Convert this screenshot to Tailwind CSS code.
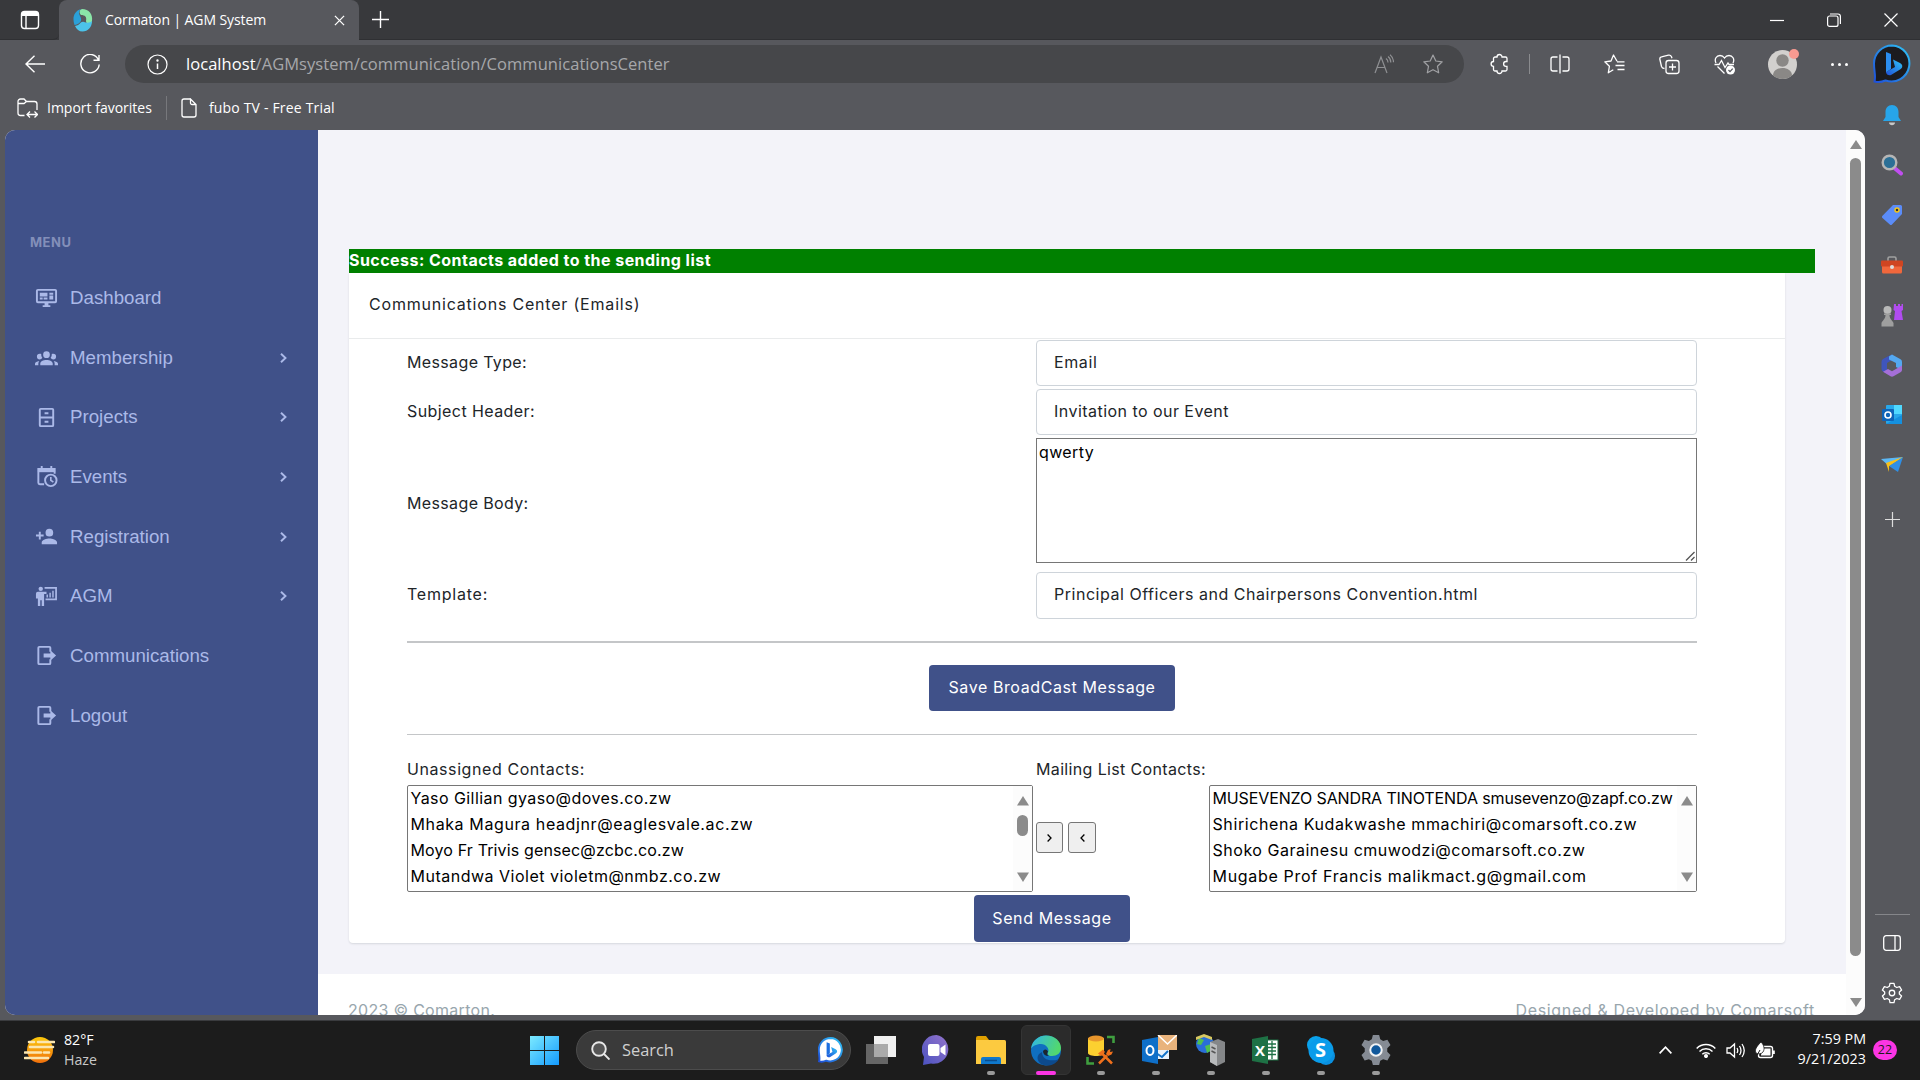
<!DOCTYPE html>
<html lang="en">
<head>
<meta charset="utf-8">
<title>Cormaton | AGM System</title>
<script src="https://cdn.jsdelivr.net/npm/@tailwindcss/browser@4"></script>
</head>
<body class="w-[1920px] h-[1080px] overflow-hidden flex flex-col bg-[#57585d] text-white font-['Open_Sans',sans-serif] whitespace-nowrap">

<!-- Tab bar -->
<header class="h-10 flex items-stretch bg-[#38393c] shrink-0">
  <div class="w-[59px] flex items-center justify-center border-b border-[#2f3033] rounded-br-md">
    <svg class="w-5 h-5" viewBox="0 0 20 20" fill="none" stroke="#fff" stroke-width="1.4"><rect x="1.5" y="1.5" width="17" height="17" rx="3"/><path d="M2 4h16" stroke-width="4"/><path d="M6 5v13"/></svg>
  </div>
  <div class="w-[300px] flex items-center bg-[#57585d] rounded-t-lg pl-[14px] pr-2">
    <svg class="w-5 h-6 mr-[12px]" viewBox="0 0 20 24"><path d="M9 1C16 1 20 6 19 13c0 4-6 4-6 0 1-4-1-6-5-6C6 5 6 2 9 1z" fill="#8ae6a8"/><path d="M8 1C1 3-1 10 1.500 17c5-1 8-4 6-8C6 6 5 4 8 1z" fill="#2aa0d8"/><path d="M2 18c6-1 5-5 9-4 3 1 6 1 8-1 0 6-4 10.500-9.500 10.500C6 23.500 3.500 21.500 2 18z" fill="#4cc3ea"/></svg>
    <span class="text-[14px] tracking-[-0.1px] pb-[2px]">Cormaton | AGM System</span>
    <svg class="w-[11px] h-[11px] ml-auto mr-1.5" viewBox="0 0 12 12" stroke="#fff" stroke-width="1.4"><path d="M1 1l10 10M11 1L1 11"/></svg>
  </div>
  <div class="flex-1 flex items-center border-b border-[#2f3033] pl-[13px]">
    <svg class="w-[17px] h-[17px]" viewBox="0 0 17 17" stroke="#fff" stroke-width="1.4"><path d="M8.5 0v17M0 8.5h17"/></svg>
    <div class="ml-auto mr-[1px] flex">
      <div class="w-[57px] flex justify-center items-center"><svg class="w-[14px] h-[14px]" viewBox="0 0 14 14" stroke="#fff" stroke-width="1.2"><path d="M0 7.500h14"/></svg></div>
      <div class="w-[57px] flex justify-center items-center"><svg class="w-[14px] h-[14px]" viewBox="0 0 14 14" fill="none" stroke="#fff" stroke-width="1.2"><rect x=".6" y="3" width="10.400" height="10.400" rx="2"/><path d="M3 1h8a2.500 2.500 0 0 1 2.400 2.500V11"/></svg></div>
      <div class="w-[57px] flex justify-center items-center"><svg class="w-[14px] h-[14px]" viewBox="0 0 14 14" stroke="#fff" stroke-width="1.200"><path d="M.5.5l13 13M13.500.500l-13 13"/></svg></div>
    </div>
  </div>
</header>

<div class="flex flex-1 min-h-0">
<div class="w-[1865px] flex flex-col">

  <!-- Toolbar -->
  <div class="h-12 flex items-center shrink-0">
    <div class="w-[69px] flex justify-center"><svg class="w-5 h-[18px]" viewBox="0 0 20 18" fill="none" stroke="#fff" stroke-width="1.400"><path d="M20 9H1M9.500.700L1 9l8.500 8.300"/></svg></div>
    <div class="w-[42px] flex justify-center"><svg class="w-5 h-5" viewBox="0 0 20 20" fill="none" stroke="#fff" stroke-width="1.400"><path d="M18.500 6A9.200 9.200 0 1 0 19.200 10.500M19 1v5.300h-5.500"/></svg></div>
    <div class="ml-[14px] w-[1339px] h-[38px] rounded-full bg-[#46474a] flex items-center pl-[22px] pr-[21px]">
      <svg class="w-[21px] h-[21px] mr-[18px]" viewBox="0 0 21 21" fill="none" stroke="#fff" stroke-width="1.200"><circle cx="10.500" cy="10.500" r="9.500"/><path d="M10.500 9.500v5.500" stroke-width="1.500"/><circle cx="10.500" cy="6.500" r=".6" fill="#fff"/></svg>
      <span class="text-[16.5px] tracking-[0.05px] text-[#a6a7aa]"><span class="text-white">localhost</span>/AGMsystem/communication/CommunicationsCenter</span>
      <svg class="w-5 h-5 ml-auto mr-[29px]" viewBox="0 0 20 20" fill="none" stroke="#8f9093" stroke-width="1.200"><path d="M1 19L7 3l6 16M3 13.500h8M12 4.500q2 1.500 2 4M14 2.500q2.800 2 2.800 6M16 .8q3.500 3 3.500 7.500"/></svg>
      <svg class="w-5 h-5" viewBox="0 0 20 20" fill="none" stroke="#a0a1a4" stroke-width="1.200" stroke-linejoin="round"><path d="M10 1l2.800 6 6.400.8-4.700 4.500 1.200 6.500L10 15.700l-5.700 3.100 1.200-6.500L.8 7.800 7.200 7z"/></svg>
    </div>
    <div class="w-[50px] ml-[10px] flex justify-center"><svg class="w-5 h-[22px]" viewBox="0 0 20 22" fill="none" stroke="#fff" stroke-width="1.300"><path d="M8 4a2.500 2.500 0 0 1 5 0h3.500A1.500 1.500 0 0 1 18 5.500v3h-1a2.400 2.400 0 0 0 0 4.800h1v3.200a1.500 1.500 0 0 1-1.500 1.500H13a2.500 2.500 0 0 1-5 0H6a1.500 1.500 0 0 1-1.500-1.500v-3.200a2.400 2.400 0 0 1 0-4.800v-3A1.500 1.500 0 0 1 6 4z"/></svg></div>
    <div class="w-[11px] flex justify-center"><div class="w-px h-5 bg-[#8a8b8e]"></div></div>
    <div class="w-[49px] mr-[3px] flex justify-center"><svg class="w-5 h-5" viewBox="0 0 20 20" fill="none" stroke="#fff" stroke-width="1.300"><path d="M7.500 3H3a2 2 0 0 0-2 2v10a2 2 0 0 0 2 2h4.500M12.500 3H17a2 2 0 0 1 2 2v10a2 2 0 0 1-2 2h-4.500M10 .5v19"/></svg></div>
    <div class="w-[55px] flex justify-center"><svg class="w-[21px] h-5" viewBox="0 0 21 20" fill="none" stroke="#fff" stroke-width="1.300" stroke-linejoin="round"><path d="M13 7.300L9.500 1 7 7l-6.200.8 4.600 4.500-1.100 6.500 5-3M13 7.800h7.500M11.500 11.500h9M13.500 15.500h7"/></svg></div>
    <div class="w-[55px] flex justify-center"><svg class="w-[21px] h-[21px]" viewBox="0 0 21 21" fill="none" stroke="#fff" stroke-width="1.300"><rect x="7" y="6.500" width="13" height="13" rx="2.500"/><path d="M13.500 9.500v7M10 13h7M5.500 14.500c-2 0-2.600-.6-3-2L.9 5.500c-.3-1.400.3-2.300 1.600-2.600l7-1.800c1.600-.3 2.400.3 3 1.700l.5 1.500"/></svg></div>
    <div class="w-[55px] flex justify-center"><svg class="w-[21px] h-[21px]" viewBox="0 0 21 21" fill="none" stroke="#fff" stroke-width="1.300"><path d="M2 9C0 5 2.500 1.500 6 1.500c2 0 3.500 1 4.500 2.500C11.500 2.500 13 1.500 15 1.500c3.500 0 6 3.500 4 7.500M3.500 12.500l7 7M.5 10.500H5l2.500-4 3.500 7 3-4.500 1 1.500h5"/><circle cx="16.500" cy="16" r="4.500" fill="#fff" stroke="none"/><path d="M14.500 16l1.500 1.600 2.700-3" stroke="#57585d"/></svg></div>
    <div class="w-[61px] flex justify-center"><div class="relative w-[29px] h-[29px]"><svg class="w-[29px] h-[29px]" viewBox="0 0 29 29"><circle cx="14.500" cy="14.500" r="14.500" fill="#d2d0ce"/><circle cx="14.500" cy="10.500" r="6.200" fill="#8a8886"/><path d="M5 25.400c0-10 19-10 19 0a14.500 14.500 0 0 1-19 0z" fill="#8a8886"/></svg><div class="absolute -top-[1px] -right-[2px] w-[10px] h-[10px] rounded-full bg-[#f79a91]"></div></div></div>
    <div class="flex-1 flex justify-center gap-[4px]"><i class="w-[3px] h-[3px] rounded-full bg-white"></i><i class="w-[3px] h-[3px] rounded-full bg-white"></i><i class="w-[3px] h-[3px] rounded-full bg-white"></i></div>
  </div>

  <!-- Favorites bar -->
  <div class="h-10 flex items-center shrink-0 pl-[17px] text-[14px]">
    <svg class="w-[21px] h-5 mr-[9px]" viewBox="0 0 21 20" fill="none" stroke="#fff" stroke-width="1.300"><path d="M7.500 17.500H3.500A2.500 2.500 0 0 1 1 15V3.500A2.500 2.500 0 0 1 3.500 1H7l2.500 2.500h8A2.500 2.500 0 0 1 20 6v6M1 5.500h6l2.500-2M10.500 16.500h9M13 13.500l-3 3 3 3M17.500 13.500l3 3-3 3"/></svg>
    <span class="pb-[2px]">Import favorites</span>
    <div class="w-px h-6 bg-[#77787c] ml-[14px] mr-[14px]"></div>
    <svg class="w-4 h-5 mr-[12px]" viewBox="0 0 16 20" fill="none" stroke="#fff" stroke-width="1.300"><path d="M9.500 1H3a2 2 0 0 0-2 2v14a2 2 0 0 0 2 2h10a2 2 0 0 0 2-2V6.500L9.500 1v4a1.500 1.500 0 0 0 1.500 1.500h4"/></svg>
    <span class="tracking-[0.18px] pb-[2px]">fubo TV - Free Trial</span>
  </div>

  <!-- Page viewport -->
  <div class="ml-[5px] h-[885px] mt-[2px] flex bg-[#f3f3f9] rounded-[10px] overflow-hidden">

    <nav class="w-[313px] shrink-0 bg-[#405189] text-[#abb9e8] font-['Liberation_Sans',Arial,sans-serif] text-[18.7px] flex flex-col">
      <div class="mt-[100px] h-[24px] leading-6 pl-[25px] text-[13px] font-bold text-[#838fb9] font-['Inter',sans-serif] tracking-[0.5px] mb-[14px]">MENU</div>
      <a class="h-[59.7px] flex items-center pl-[30px] pr-[31px]"><svg class="w-[23px] h-[23px] mr-[12px]" viewBox="0 0 24 24" fill="currentColor"><path fill-rule="evenodd" d="M3 3h18a2 2 0 0 1 2 2v11a2 2 0 0 1-2 2h-7v2h2v2H8v-2h2v-2H3a2 2 0 0 1-2-2V5a2 2 0 0 1 2-2zm0 2v11h18V5z"/><path d="M5 7h8v4H5zM15 7h4v2h-4zM15 10h4v4h-4zM5 12h3v2H5zM9 12h4v2H9z"/></svg>Dashboard</a>
      <a class="h-[59.7px] flex items-center pl-[30px] pr-[31px]"><svg class="w-[23px] h-[23px] mr-[12px]" viewBox="0 0 24 24" fill="currentColor"><path d="M12,5.500A3.500,3.500 0 0,1 15.500,9A3.500,3.500 0 0,1 12,12.500A3.500,3.500 0 0,1 8.500,9A3.500,3.500 0 0,1 12,5.500M5,8C5.560,8 6.080,8.150 6.530,8.420C6.380,9.850 6.800,11.270 7.660,12.380C7.160,13.340 6.160,14 5,14A3,3 0 0,1 2,11A3,3 0 0,1 5,8M19,8A3,3 0 0,1 22,11A3,3 0 0,1 19,14C17.840,14 16.840,13.340 16.340,12.380C17.200,11.270 17.620,9.850 17.470,8.420C17.920,8.150 18.440,8 19,8M5.500,18.250C5.500,16.180 8.410,14.500 12,14.500C15.590,14.500 18.500,16.180 18.500,18.250V20H5.500V18.250M0,20V18.500C0,17.110 1.890,15.940 4.450,15.600C3.860,16.280 3.500,17.220 3.500,18.250V20H0M24,20H20.500V18.250C20.500,17.220 20.140,16.280 19.550,15.600C22.110,15.940 24,17.110 24,18.500V20Z"/></svg>Membership<svg class="w-[7px] h-[10px] ml-auto" viewBox="0 0 7 10" fill="none" stroke="currentColor" stroke-width="1.900"><path d="M1 .7L5.500 5 1 9.300"/></svg></a>
      <a class="h-[59.7px] flex items-center pl-[30px] pr-[31px]"><svg class="w-[23px] h-[23px] mr-[12px]" viewBox="0 0 24 24" fill="none" stroke="currentColor" stroke-width="2"><rect x="5" y="3" width="14" height="18" rx="1"/><path d="M5 12h14M10 7.500h4M10 16.500h4"/></svg>Projects<svg class="w-[7px] h-[10px] ml-auto" viewBox="0 0 7 10" fill="none" stroke="currentColor" stroke-width="1.900"><path d="M1 .7L5.500 5 1 9.300"/></svg></a>
      <a class="h-[59.7px] flex items-center pl-[30px] pr-[31px]"><svg class="w-[23px] h-[23px] mr-[12px]" viewBox="0 0 24 24" fill="none" stroke="currentColor" stroke-width="2"><path d="M9.500 20H5a1.500 1.500 0 0 1-1.500-1.500V4h17v5M7 1v3M17 1v3"/><path d="M3 5.500h18" stroke-width="4"/><circle cx="16.500" cy="16" r="6"/><path d="M16.500 12.500V16l2.700 1.700" stroke-width="1.700"/></svg>Events<svg class="w-[7px] h-[10px] ml-auto" viewBox="0 0 7 10" fill="none" stroke="currentColor" stroke-width="1.900"><path d="M1 .7L5.500 5 1 9.300"/></svg></a>
      <a class="h-[59.7px] flex items-center pl-[30px] pr-[31px]"><svg class="w-[23px] h-[23px] mr-[12px]" viewBox="0 0 24 24" fill="currentColor"><path d="M15,14C12.330,14 7,15.330 7,18V20H23V18C23,15.330 17.670,14 15,14M6,10V7H4V10H1V12H4V15H6V12H9V10M15,12A4,4 0 0,0 19,8A4,4 0 0,0 15,4A4,4 0 0,0 11,8A4,4 0 0,0 15,12Z"/></svg>Registration<svg class="w-[7px] h-[10px] ml-auto" viewBox="0 0 7 10" fill="none" stroke="currentColor" stroke-width="1.900"><path d="M1 .7L5.500 5 1 9.300"/></svg></a>
      <a class="h-[59.7px] flex items-center pl-[30px] pr-[31px]"><svg class="w-[23px] h-[23px] mr-[12px]" viewBox="0 0 24 24" fill="currentColor"><circle cx="6" cy="4" r="2.300"/><path d="M3 7h9v2.500H9.500V22H7v-6H5.500v6H3v-8H1V9a2 2 0 0 1 2-2z"/><path d="M10 3h12v12H11" fill="none" stroke="currentColor" stroke-width="1.800"/><path d="M12 10h1.500v3H12zM15 8h1.500v5H15zM18 6h1.500v7H18z"/></svg>AGM<svg class="w-[7px] h-[10px] ml-auto" viewBox="0 0 7 10" fill="none" stroke="currentColor" stroke-width="1.900"><path d="M1 .7L5.500 5 1 9.300"/></svg></a>
      <a class="h-[59.7px] flex items-center pl-[30px] pr-[31px]"><svg class="w-[23px] h-[23px] mr-[12px]" viewBox="0 0 24 24" fill="none" stroke="currentColor" stroke-width="2"><path d="M16 8V4a1 1 0 0 0-1-1H4.500a1 1 0 0 0-1 1v16a1 1 0 0 0 1 1H15a1 1 0 0 0 1-1v-4"/><path d="M9 10h7V6.500l6 5.500-6 5.500V14H9z" fill="currentColor" stroke="none"/></svg>Communications</a>
      <a class="h-[59.7px] flex items-center pl-[30px] pr-[31px]"><svg class="w-[23px] h-[23px] mr-[12px]" viewBox="0 0 24 24" fill="none" stroke="currentColor" stroke-width="2"><path d="M16 8V4a1 1 0 0 0-1-1H4.500a1 1 0 0 0-1 1v16a1 1 0 0 0 1 1H15a1 1 0 0 0 1-1v-4"/><path d="M9 10h7V6.500l6 5.500-6 5.500V14H9z" fill="currentColor" stroke="none"/></svg>Logout</a>
    </nav>

    <main class="w-[1528px] shrink-0 flex flex-col font-['Inter',sans-serif] text-[16px] leading-6 text-[#212529]">
      <div class="mt-[119px] ml-[31px] w-[1466px] h-[24px] shrink-0 bg-[#008000] text-white font-bold tracking-[0.46px] leading-[23px]">Success: Contacts added to the sending list</div>

      <section class="ml-[31px] w-[1436px] h-[670px] shrink-0 bg-white rounded-b shadow-[0_1px_2px_rgba(56,65,74,0.15)] flex flex-col">
        <h1 class="h-[66px] shrink-0 pt-[19px] px-5 border-b border-[#e9ebec] tracking-[0.8px]">Communications Center (Emails)</h1>

        <div class="pl-[58px] pr-[88px] flex flex-col">
          <div class="mt-[1px] flex items-center h-[48px]">
            <span class="w-[629px] tracking-[0.36px] pb-1">Message Type:</span>
            <div class="w-[661px] h-[46px] mb-[2px] border border-[#ced4da] rounded px-[17px] leading-[43px] tracking-[0.6px]">Email</div>
          </div>
          <div class="flex items-center h-[50px]">
            <span class="w-[629px] tracking-[0.42px] pb-1">Subject Header:</span>
            <div class="w-[661px] h-[46px] mb-[2px] border border-[#ced4da] rounded px-[17px] leading-[43px] tracking-[0.46px]">Invitation to our Event</div>
          </div>
          <div class="flex items-start h-[134px]">
            <span class="w-[629px] mt-[53px] tracking-[0.36px]">Message Body:</span>
            <div class="relative w-[661px] h-[125px] border border-[#767676] pl-[2px] pt-[1px] text-black tracking-[0.38px]">qwerty<svg class="absolute right-[1px] bottom-[1px] w-[10px] h-[10px]" viewBox="0 0 10 10" stroke="#555" stroke-width="1.300"><path d="M1 9.500L9.500 1M6 9.500L9.500 6"/></svg></div>
          </div>
          <div class="flex items-start h-[69px]">
            <span class="w-[629px] mt-[10px] tracking-[0.77px]">Template:</span>
            <div class="w-[661px] h-[47px] border border-[#ced4da] rounded px-[17px] leading-[43px] tracking-[0.53px]">Principal Officers and Chairpersons Convention.html</div>
          </div>
          <div class="h-[2px] bg-[#c4c6c8]"></div>
          <button class="mt-[22px] ml-[522px] w-[246px] h-[46px] rounded bg-[#405189] text-white tracking-[0.6px] pb-[2px]">Save BroadCast Message</button>
          <div class="mt-[23px] h-px bg-[#c4c6c8]"></div>
          <div class="mt-[22px] h-[28px] flex">
            <span class="w-[629px] tracking-[0.58px]">Unassigned Contacts:</span>
            <span class="tracking-[0.35px]">Mailing List Contacts:</span>
          </div>
          <div class="flex h-[107px] text-black leading-[26px]">
            <div class="w-[626px] flex border border-[#767676] rounded-[2px]">
              <ul class="flex-1 pl-[2.5px] -mt-px">
                <li class="tracking-[0.43px]">Yaso Gillian gyaso@doves.co.zw</li>
                <li class="tracking-[0.61px]">Mhaka Magura headjnr@eaglesvale.ac.zw</li>
                <li class="tracking-[0.14px]">Moyo Fr Trivis gensec@zcbc.co.zw</li>
                <li class="tracking-[0.5px]">Mutandwa Violet violetm@nmbz.co.zw</li>
              </ul>
              <div class="w-[19px] bg-[#fcfcfc] flex flex-col items-center pt-[10px] pb-[9px]">
                <svg class="w-3 h-[10px]" viewBox="0 0 12 10" fill="#8b8b8b"><path d="M6 0l6 9.500H0z"/></svg>
                <div class="mt-[9px] w-[11px] h-[21px] rounded-full bg-[#8b8b8b]"></div>
                <svg class="mt-auto w-3 h-[10px]" viewBox="0 0 12 10" fill="#8b8b8b"><path d="M6 10L0 .5h12z"/></svg>
              </div>
            </div>
            <div class="ml-[3px] mt-[37px] flex gap-[5px]">
              <button class="w-[27px] h-[31px] bg-[#efefef] border border-[#767676] rounded-[3px] flex items-center justify-center"><svg class="w-[5px] h-2" viewBox="0 0 5 8" fill="none" stroke="#000" stroke-width="1.300"><path d="M.6.500L4 4 .6 7.500"/></svg></button>
              <button class="w-[28px] h-[31px] bg-[#efefef] border border-[#767676] rounded-[3px] flex items-center justify-center"><svg class="w-[5px] h-2" viewBox="0 0 5 8" fill="none" stroke="#000" stroke-width="1.300"><path d="M4.400.500L1 4l3.400 3.500"/></svg></button>
            </div>
            <div class="ml-auto w-[488px] flex border border-[#767676] rounded-[2px]">
              <ul class="flex-1 min-w-0 pl-[2.5px] -mt-px">
                <li class="tracking-[-0.12px]">MUSEVENZO SANDRA TINOTENDA smusevenzo@zapf.co.zw</li>
                <li class="tracking-[0.6px]">Shirichena Kudakwashe mmachiri@comarsoft.co.zw</li>
                <li class="tracking-[0.52px]">Shoko Garainesu cmuwodzi@comarsoft.co.zw</li>
                <li class="tracking-[0.68px]">Mugabe Prof Francis malikmact.g@gmail.com</li>
              </ul>
              <div class="w-[19px] bg-[#fcfcfc] flex flex-col items-center pt-[10px] pb-[9px]">
                <svg class="w-3 h-[10px]" viewBox="0 0 12 10" fill="#8b8b8b"><path d="M6 0l6 9.500H0z"/></svg>
                <svg class="mt-auto w-3 h-[10px]" viewBox="0 0 12 10" fill="#8b8b8b"><path d="M6 10L0 .5h12z"/></svg>
              </div>
            </div>
          </div>
          <button class="mt-[3px] ml-[567px] w-[156px] h-[47px] rounded bg-[#405189] text-white tracking-[0.6px] pb-[2px]">Send Message</button>
        </div>
      </section>

      <footer class="mt-[31px] h-[60px] shrink-0 bg-white text-[#98a6ad] pl-[30px] pr-[31px] pt-[24px] flex justify-between">
        <span class="tracking-[0.29px]">2023 © Comarton.</span>
        <span class="tracking-[0.64px]">Designed &amp; Developed by Comarsoft</span>
      </footer>
    </main>

    <div class="flex-1 bg-[#fcfcfc] flex flex-col items-center pt-[10px] pb-[8px]">
      <svg class="w-3 h-[9px]" viewBox="0 0 12 10" preserveAspectRatio="none" fill="#8b8b8b"><path d="M6 0l6 10H0z"/></svg>
      <div class="mt-[9px] w-[11px] h-[798px] rounded-full bg-[#8b8b8b]"></div>
      <svg class="mt-auto w-3 h-[9px]" viewBox="0 0 12 10" preserveAspectRatio="none" fill="#8b8b8b"><path d="M6 10L0 0h12z"/></svg>
    </div>
  </div>
</div>

<!-- Edge sidebar -->
<aside class="w-[55px] pr-[1px] flex flex-col items-center">
  <div class="h-12 flex items-center"><svg class="w-[38px] h-[40px]" viewBox="0 0 38 40"><defs><linearGradient id="bg1" x1="0" y1="1" x2="1" y2="0"><stop offset="0" stop-color="#1f4fd8"/><stop offset="1" stop-color="#2fc3f5"/></linearGradient></defs><path d="M19 1.500a18 18 0 1 1-6.500 35C9 38 5 38.500 1.500 37.500 3 32 1 28 1 19.500A18 18 0 0 1 19 1.500z" fill="#1b1b1f" stroke="url(#bg1)" stroke-width="2"/><path d="M13 8l5 2v15l-5 3.500z" fill="#2b8df0"/><path d="M20 15.500l7 3.500c3 1.500 3 5 0 6.500L18 31c-2 1-5-.5-5-3l9-5z" fill="url(#bg1)"/></svg></div>
  <div class="mt-[2px] h-[50px] flex items-center"><svg class="w-5 h-[22px]" viewBox="0 0 20 22"><path d="M10 1c4 0 6.500 3 6.500 7v5L19 17H1l2.500-4V8C3.500 4 6 1 10 1z" fill="#27a5ea"/><path d="M7 18.500h6c0 3.500-6 3.500-6 0z" fill="#c8c8c8"/></svg></div>
  <div class="h-[49px] flex items-center"><svg class="w-[22px] h-[22px]" viewBox="0 0 22 22"><path d="M14 14.500l6 5" stroke="#c04ef0" stroke-width="4" stroke-linecap="round"/><circle cx="8.500" cy="8.500" r="6.800" fill="#2b6f96" stroke="#b5b5b5" stroke-width="2.400"/></svg></div>
  <div class="h-[51px] flex items-center"><svg class="w-[22px] h-[22px]" viewBox="0 0 22 22"><path d="M12 1h7.500A1.500 1.500 0 0 1 21 2.500V10l-10 10.500c-.7.700-1.500.7-2.200 0L1.500 14c-.7-.7-.7-1.500 0-2.200z" fill="#5b8cf8"/><circle cx="16" cy="6" r="2" fill="#333" stroke="#f5c518" stroke-width="1.500"/></svg></div>
  <div class="h-[50px] flex items-center"><svg class="w-6 h-[18px]" viewBox="0 0 24 18"><path d="M8 5V2.500Q8 1 9.500 1h5Q16 1 16 2.500V5" fill="none" stroke="#a0a0a0" stroke-width="1.600"/><rect x="2" y="8" width="20" height="9.500" rx="1.500" fill="#f0673c"/><rect x="1" y="4.500" width="22" height="6" rx="1" fill="#cf4522"/><circle cx="12" cy="11" r="2" fill="#ddd"/></svg></div>
  <div class="h-[50px] flex items-center"><svg class="w-6 h-6" viewBox="0 0 24 24"><path d="M14 1h2v2h2V1h2v2h1.500V1H23v6l-1.500 1L23 17h-9l1-9-1.500-1z" fill="#b14cf0"/><circle cx="7.500" cy="7" r="4" fill="#b9b9b9"/><path d="M4 10.500h7v1.500H9.500c0 4 3.500 6 4 8v3.500h-12V20c.5-2 4-4 4-8H4z" fill="#9f9f9f"/></svg></div>
  <div class="h-[50px] flex items-center"><svg class="w-[22px] h-[23px]" viewBox="0 0 22 23"><path d="M9 1.200L2 5Q.5 6 .5 8v7q0 2 2 3l3.500 1.500V9l6-3.500V1Q10.500.3 9 1.200z" fill="#3f55bc"/><path d="M11 .5l8.500 4.700Q21 6 21 8v8l-6-3V9L8 5.500V2.500z" fill="#54a8f0"/><path d="M2 17.700L7 15l4 2.300 10-5.800V16q0 1.500-1.500 2.300l-7 4q-1.500.8-3 0z" fill="#a56fd8"/></svg></div>
  <div class="h-[50px] flex items-center"><svg class="w-5 h-5" viewBox="0 0 20 20"><rect x="4" y="0" width="16" height="19" rx="1" fill="#28a8ea"/><path d="M12 0h8v9h-8z" fill="#50d9ff"/><path d="M4 19l16-9v9z" fill="#1490df"/><rect x="0" y="4" width="12" height="12" rx="1" fill="#0f64b8"/><circle cx="6" cy="10" r="3" fill="none" stroke="#fff" stroke-width="1.600"/></svg></div>
  <div class="h-[50px] flex items-center"><svg class="w-[22px] h-[18px]" viewBox="0 0 22 18"><path d="M0 3l22-2-14 9z" fill="#5cb8f5"/><path d="M22 1L17 16l-9-6z" fill="#2f8fe6"/><path d="M5 7l17-6L8 10v6z" fill="#f8c018"/></svg></div>
  <div class="mt-[4px] h-[50px] flex items-center"><svg class="w-[15px] h-[15px]" viewBox="0 0 15 15" stroke="#ddd" stroke-width="1.200"><path d="M7.500 0v15M0 7.500h15"/></svg></div>
  <div class="mt-auto w-[35px] h-px bg-[#85868a]"></div>
  <div class="mt-[3px] h-[50px] flex items-center"><svg class="w-[18px] h-4" viewBox="0 0 18 16" fill="none" stroke="#fff" stroke-width="1.300"><rect x=".7" y=".7" width="16.600" height="14.600" rx="2.500"/><path d="M12 1v14"/></svg></div>
  <div class="h-[50px] mb-[2px] flex items-center"><svg class="w-[22px] h-[22px]" viewBox="0 0 24 24" fill="none" stroke="#fff" stroke-width="1.400" stroke-linejoin="round"><circle cx="12" cy="12" r="3"/><path d="M9.800 1.500h4.400l.7 3.200 2.300 1.300 3.100-1 2.200 3.800L20 11v2l2.500 2.200-2.200 3.800-3.100-1-2.300 1.300-.7 3.200H9.800l-.7-3.200L6.800 18l-3.100 1-2.200-3.800L4 13v-2L1.500 8.800 3.700 5l3.100 1 2.300-1.300z"/></svg></div>
</aside>
</div>

<!-- Taskbar -->
<footer class="h-[60px] shrink-0 bg-[#1c1c1c] border-t border-[#3a3b3e] flex items-center pb-[1px]">
  <svg class="w-[31px] h-7 ml-[24px]" viewBox="0 0 31 28"><defs><linearGradient id="sun" x1="0" y1="0" x2="0" y2="1"><stop offset="0" stop-color="#fcc80c"/><stop offset="1" stop-color="#f0700c"/></linearGradient></defs><circle cx="16" cy="14" r="13" fill="url(#sun)"/><path d="M5 6h5M14 6h16M6 11h23M1 16.500h16M20 16.500h5M1 22h23" stroke="#fbe6b0" stroke-width="2.600" stroke-linecap="round"/></svg>
  <div class="ml-[9px] w-[60px] text-[14.2px] leading-[20px] pb-[1px]"><div>82°F</div><div class="text-[#c8c8c8]">Haze</div></div>
  <svg class="ml-[406px] w-[29px] h-[29px]" viewBox="0 0 29 29"><defs><linearGradient id="win" x1="0" y1="0" x2="1" y2="1"><stop offset="0" stop-color="#7ceaff"/><stop offset="1" stop-color="#149bff"/></linearGradient></defs><path d="M0 0h14v14H0zM15 0h14v14H15zM0 15h14v14H0zM15 15h14v14H15z" fill="url(#win)"/></svg>
  <div class="ml-[17px] w-[275px] h-10 rounded-full bg-[#3a3a3a] border border-[#4c4c4c] flex items-center pl-[14px] pr-[7px]">
    <svg class="w-[19px] h-[19px] mr-[12px]" viewBox="0 0 19 19" fill="none" stroke="#e8e8e8" stroke-width="1.900"><circle cx="8" cy="8" r="6.800" fill="#555"/><path d="M13 13l5.500 5.500"/></svg>
    <span class="text-[16.4px] text-[#d0d0d0]">Search</span>
    <svg class="w-[25px] h-[26px] ml-auto" viewBox="0 0 38 40"><path d="M19 1.500a18 18 0 1 1-6.500 35C9 38 5 38.500 1.500 37.500 3 32 1 28 1 19.500A18 18 0 0 1 19 1.500z" fill="#fff" stroke="url(#bg1)" stroke-width="3"/><path d="M13 8l5 2v15l-5 3.500z" fill="#1d6fe0"/><path d="M20 15.500l7 3.500c3 1.500 3 5 0 6.500L18 31c-2 1-5-.5-5-3l9-5z" fill="url(#bg1)"/></svg>
  </div>
  <div class="ml-[3px] flex items-center h-full">
    <div class="w-[54px] h-full flex justify-center items-center"><svg class="w-[30px] h-[30px]" viewBox="0 0 30 30"><rect x="8" y="1" width="22" height="21" fill="#f0f0f0"/><rect x="0" y="9" width="22" height="20" fill="#666"/><rect x="8" y="9" width="14" height="13" fill="#aaa"/></svg></div>
    <div class="w-[55px] h-full flex justify-center items-center"><svg class="w-[29px] h-[30px] ml-[2px]" viewBox="0 0 29 30"><defs><linearGradient id="chat" x1="0" y1="1" x2="1" y2="0"><stop offset="0" stop-color="#4a52c0"/><stop offset="1" stop-color="#9474cc"/></linearGradient></defs><path d="M14.500 0A14.500 14.500 0 1 1 9 28.500L1 30l1-8A14.500 14.500 0 0 1 14.500 0z" fill="url(#chat)"/><rect x="6" y="9" width="11.500" height="12" rx="2" fill="#fff"/><path d="M18.500 13l5-3.500v11l-5-3.500z" fill="#fff"/></svg></div>
    <div class="relative w-[56px] h-full flex justify-center items-center"><svg class="w-[30px] h-[29px]" viewBox="0 0 30 29"><path d="M0 2Q0 0 2 0h8l3 4H0z" fill="#e0a000"/><path d="M0 4h28.500Q30 4 30 5.500V28H0z" fill="#fcca40"/><path d="M5 28v-5q0-2 2-2h16q2 0 2 2v5z" fill="#0f78cc"/><path d="M9 24.500h12" stroke="#0a4c8c" stroke-width="1.500"/></svg><i class="absolute bottom-[4px] w-2 h-1 rounded-full bg-[#9a9a9a]"></i></div>
    <div class="relative w-[54px] h-full flex justify-center items-center"><div class="w-[50px] h-[50px] rounded-md bg-[#2b2b2b] border border-[#343434] flex items-center justify-center"><svg class="w-[30px] h-[31px]" viewBox="0 0 30 31"><defs><linearGradient id="edg" x1="0" y1="0" x2="1" y2=".3"><stop offset="0" stop-color="#2eb4ea"/><stop offset="1" stop-color="#52d86e"/></linearGradient></defs><circle cx="15" cy="15.500" r="15" fill="#0f6fc0"/><path d="M0 14C1 5 8 .5 15 .5c9 0 15 6 15 12.500 0 5-4 8-9 8-4 0-5-2-4-3.500C19 14 15 9 10 9 5 9 1 11.500 0 14z" fill="url(#edg)"/><path d="M11 17c0 7 7 10 16.500 7.500C24 30 17 32 11 29.500c-6-3-6-10 0-12.500z" fill="#0d4a8c"/><path d="M12 16q3-3 5 .5-2 3 1 4.500-6 0-6-5z" fill="#1b2630"/></svg></div><i class="absolute bottom-[4px] w-5 h-1 rounded-full bg-[#fb35e4]"></i></div>
    <div class="relative w-[55px] h-full flex justify-center items-center"><svg class="w-[29px] h-[30px]" viewBox="0 0 29 30"><path d="M2 3v15c0 4 16 4 16 0V3z" fill="#fcd030"/><ellipse cx="10" cy="3.500" rx="8" ry="3" fill="#e8962c"/><path d="M21 2h6.500v6M1.500 22v6.500H8" fill="none" stroke="#3f9e3f" stroke-width="2.600"/><path d="M13 28.500l8-8M16 18.500l10 10" stroke="#f0701c" stroke-width="2.500"/><path d="M12 18.500l5-4 2 2.500-4 4zM20 19l2-4 2.500-1-.5 3 3-.5-1.500 3-3.500 1.500z" fill="#f0701c"/></svg><i class="absolute bottom-[4px] w-2 h-1 rounded-full bg-[#9a9a9a]"></i></div>
    <div class="relative w-[55px] h-full flex justify-center items-center"><svg class="w-[35px] h-[30px] ml-[7px]" viewBox="0 0 35 30"><rect x="13" y="9" width="14" height="15" fill="#e8f2fb"/><path d="M14 18l6 4 6-6" stroke="#1272c8" stroke-width="2" fill="none"/><path d="M0 5l16-3v27L0 26z" fill="#0f6fc8"/><ellipse cx="8" cy="15.500" rx="3.500" ry="4.500" fill="none" stroke="#fff" stroke-width="2"/><rect x="16" y="0" width="19" height="15" fill="#e9b37c"/><path d="M16 0l9.500 9L35 0" stroke="#fff" stroke-width="1.500" fill="none"/></svg><i class="absolute bottom-[4px] w-2 h-1 rounded-full bg-[#9a9a9a]"></i></div>
    <div class="relative w-[55px] h-full flex justify-center items-center"><svg class="w-[29px] h-[32px]" viewBox="0 0 29 32"><circle cx="9" cy="10" r="9" fill="#2a6fd8"/><path d="M3 4l5 2-3 5-4-1zM9 12l6-2 1 6-5 3z" fill="#4fc050"/><path d="M0 3l8-3 8 3v3L8 3 0 6z" fill="#d8c860"/><path d="M14 8l8-3 7 3v20l-8 4-7-4z" fill="#858789"/><path d="M14 8l7 3v21l-7-4z" fill="#b8babc"/><path d="M15.500 13l4 2M15.500 17l4 2" stroke="#555" stroke-width="1.500"/></svg><i class="absolute bottom-[4px] w-2 h-1 rounded-full bg-[#9a9a9a]"></i></div>
    <div class="relative w-[55px] h-full flex justify-center items-center"><svg class="w-[27px] h-[28px]" viewBox="0 0 27 28"><rect x="13" y="4" width="13" height="20" fill="#fff" stroke="#1e7145"/><path d="M16 8h8M16 11.500h8M16 15h8M16 18.500h8M20 5v18" stroke="#1e7145" stroke-width="1.300"/><path d="M0 3l16-3v28L0 25z" fill="#1e7145"/></svg><span class="absolute left-[17px] top-[17px] text-[15px] leading-6 font-bold">X</span><i class="absolute bottom-[4px] w-2 h-1 rounded-full bg-[#9a9a9a]"></i></div>
    <div class="relative w-[55px] h-full flex justify-center items-center"><svg class="w-[28px] h-[29px]" viewBox="0 0 28 29"><circle cx="9" cy="9" r="9" fill="#0aa2ec"/><circle cx="19" cy="20" r="9" fill="#0a90e0"/><circle cx="14" cy="14.500" r="12.500" fill="#0a9cea"/></svg><span class="absolute text-[20px] leading-6 font-bold">S</span><i class="absolute bottom-[4px] w-2 h-1 rounded-full bg-[#9a9a9a]"></i></div>
    <div class="relative w-[55px] h-full flex justify-center items-center"><svg class="w-[30px] h-[30px]" viewBox="0 0 24 24"><path d="M9.500 0h5l.9 3.400 2.300 1.300 3.400-1L23.600 8 21 10.600v2.800l2.600 2.600-2.500 4.300-3.400-1-2.300 1.300-.9 3.400h-5l-.9-3.400-2.300-1.300-3.400 1L.4 16 3 13.400v-2.800L.4 8l2.500-4.300 3.400 1 2.300-1.300z" fill="#858b94"/><circle cx="12" cy="12" r="4.600" fill="#10589c" stroke="#f0f2f4" stroke-width="1.600"/></svg><i class="absolute bottom-[4px] w-2 h-1 rounded-full bg-[#9a9a9a]"></i></div>
  </div>
  <div class="ml-auto flex items-center pr-[23px]">
    <svg class="w-[13px] h-2 mr-[24px]" viewBox="0 0 13 8" fill="none" stroke="#fff" stroke-width="1.700"><path d="M.6 7.300L6.500 1.200l5.900 6.100"/></svg>
    <svg class="w-5 h-[15px] mr-[10px]" viewBox="0 0 20 15" fill="none" stroke="#fff" stroke-width="1.500"><path d="M.7 5.500a13 13 0 0 1 18.600 0M3.500 8.500a9.200 9.200 0 0 1 13 0M6.300 11.200a5.300 5.300 0 0 1 7.400 0"/><circle cx="10" cy="13" r="1.300" fill="#fff"/></svg>
    <svg class="w-5 h-[17px] mr-[9px]" viewBox="0 0 20 17" fill="none" stroke="#fff" stroke-width="1.300"><path d="M1 6v5h3l4.500 4V2L4 6zM11 6q1.500 2.500 0 5M13.500 4q3 4.500 0 9M16 2q4.500 6.500 0 13"/></svg>
    <svg class="w-5 h-[17px] mr-[21px]" viewBox="0 0 20 17"><rect x="3.500" y="4.500" width="14" height="11" rx="2" fill="none" stroke="#fff" stroke-width="1.400"/><path d="M18 8.500h1.800v3.500H18z" fill="#fff"/><path d="M7 6.500h8.500v7H6z" fill="#fff"/><path d="M6 0c3 3 4 7 2 10-1.500 2-5 2.500-7 1C-.5 8 1 5 6 0z" fill="#fff" stroke="#1c1c1c" stroke-width=".8"/><path d="M1 15l4-7" stroke="#1c1c1c"/></svg>
    <div class="w-[70px] text-right text-[14.3px] leading-[20px] pb-[2px]"><div>7:59 PM</div><div class="-mx-1 tracking-[0.1px] pr-1">9/21/2023</div></div>
    <div class="ml-[7px] w-6 h-5 rounded-full bg-[#fb35e4] text-[#1c1c1c] text-[12.5px] leading-5 text-center">22</div>
  </div>
</footer>
</body>
</html>
